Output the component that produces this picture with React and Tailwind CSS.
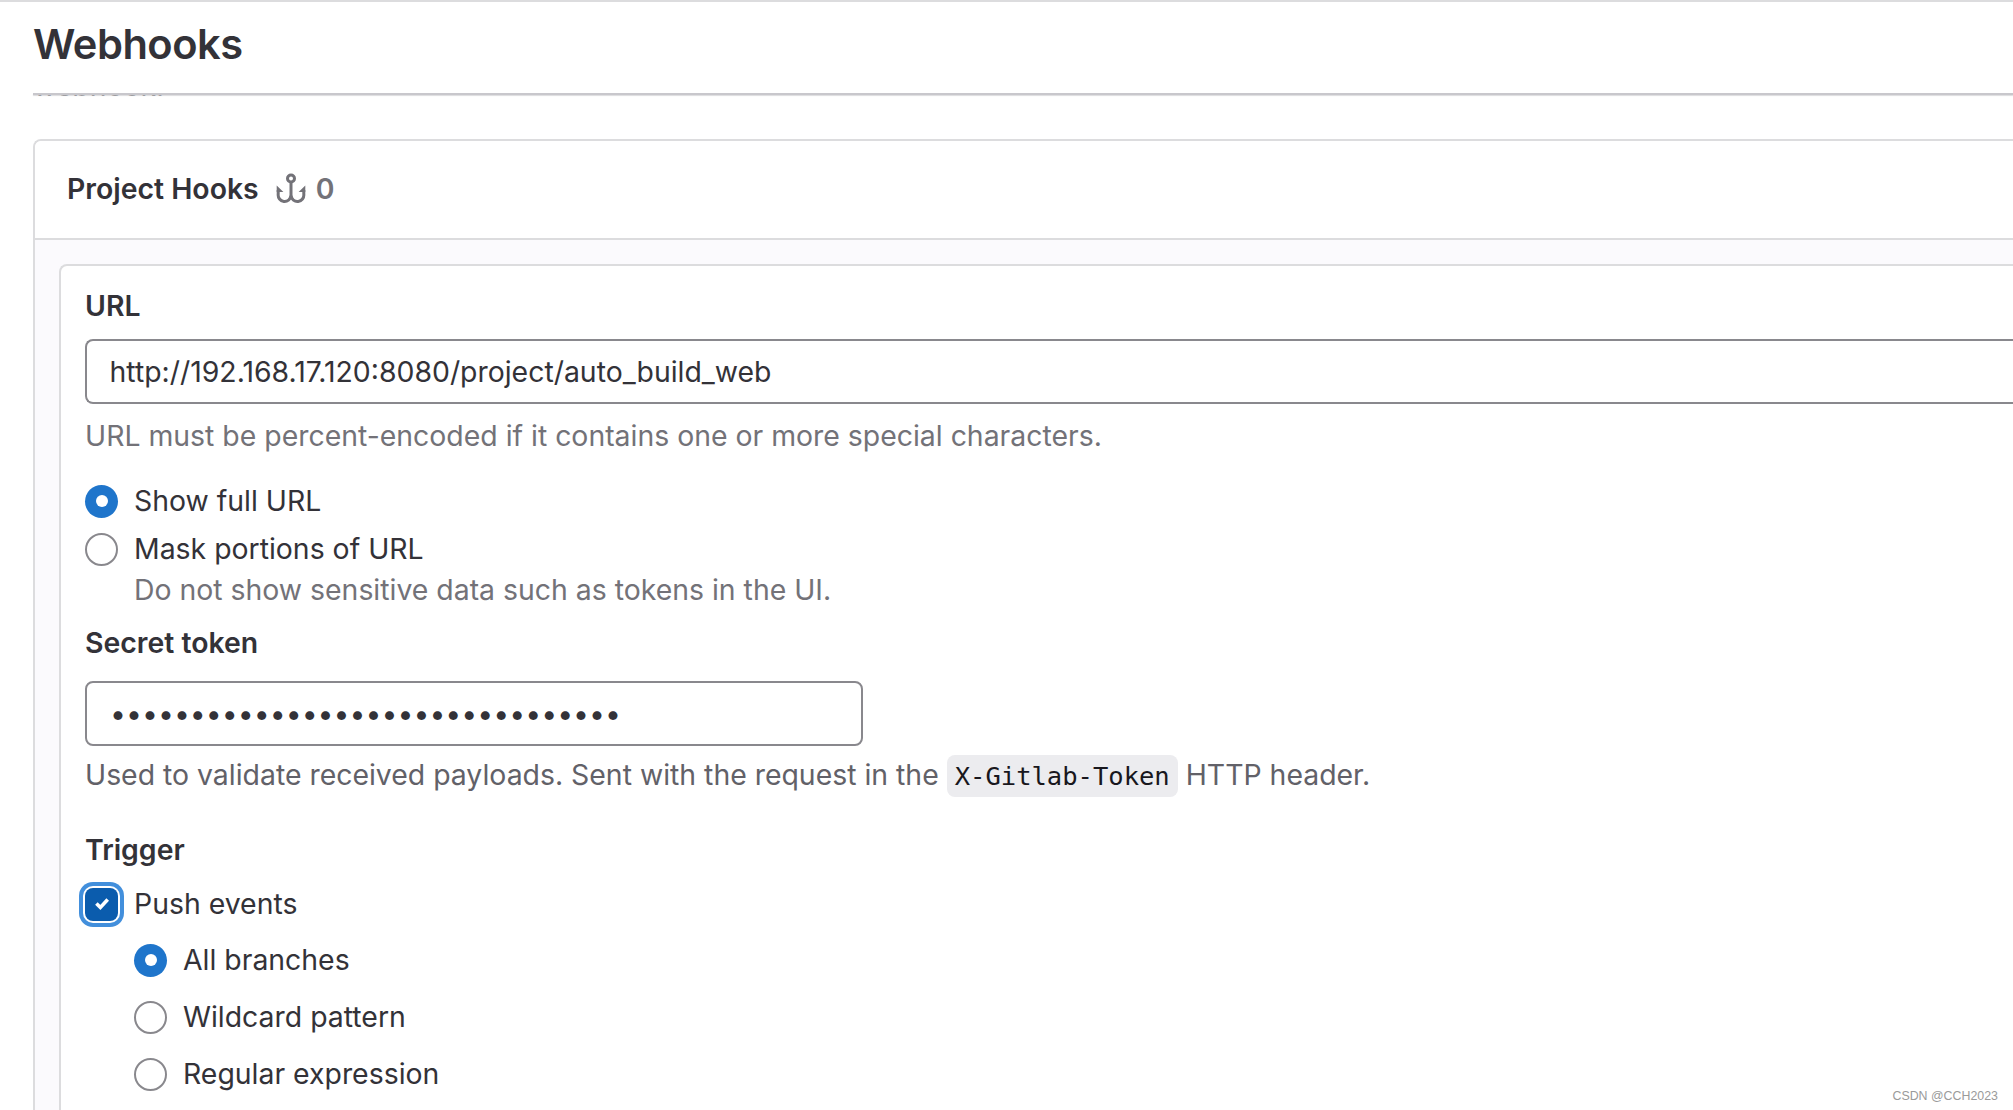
import React, { useState } from 'react';

const HookIcon = () => (
    <svg className="-mt-[2px] w-[30px] h-[30px]" viewBox="0 0 30 30" fill="none" stroke="currentColor" strokeWidth="3">
        <circle cx="15" cy="5.5" r="3.5" />
        <path d="M15 9v15.2" />
        <path d="M2.2 17v4.2a6.4 6.4 0 0 0 12.8 1.6a6.4 6.4 0 0 0 12.8-1.6V17" />
        <path d="M.7 12.6l6.7 6.4H.7zM29.3 12.6l-6.7 6.4h6.7z" fill="currentColor" stroke="none" />
    </svg>
);

const Radio = ({ label, checked, onSelect, className }) => (
    <label className={`flex h-10 items-center gap-4 ${className}`}>
        <input type="radio" checked={checked} onChange={onSelect} className="sr-only" />
        {checked ? (
            <span className="flex h-[33px] w-[33px] shrink-0 items-center justify-center rounded-full bg-[#1f75cb]">
                <span className="h-3 w-3 rounded-full bg-white" />
            </span>
        ) : (
            <span className="h-[33px] w-[33px] shrink-0 rounded-full border-2 border-[#89888d] bg-white" />
        )}
        <span>{label}</span>
    </label>
);

const Checkbox = ({ label, checked, onToggle }) => (
    <label className="mt-[14px] flex h-10 items-center gap-4">
        <input type="checkbox" checked={checked} onChange={onToggle} className="sr-only" />
        <span className="flex h-[33px] w-[33px] shrink-0 items-center justify-center rounded-[8px] bg-[#0b5cad] ring-4 ring-[#428fdc] ring-offset-2 ring-offset-white">
            {checked && (
                <svg className="h-[14px] w-4" viewBox="0 0 16 14" fill="none" stroke="white" strokeWidth="3.6">
                    <path d="M2.4 6.4l4 4L13.7 2.6" />
                </svg>
            )}
        </span>
        <span>{label}</span>
    </label>
);

const branchFilters = ['All branches', 'Wildcard pattern', 'Regular expression'];

const App = () => {
    const [url, setUrl] = useState('http://192.168.17.120:8080/project/auto_build_web');
    const [token, setToken] = useState('0123456789abcdef0123456789abcdef');
    const [maskUrl, setMaskUrl] = useState(false);
    const [pushEvents, setPushEvents] = useState(true);
    const [branchFilter, setBranchFilter] = useState('All branches');

    return (
        <div className="relative flex h-screen flex-col overflow-hidden border-t-2 border-[#dcdcde] bg-white pl-[33px] font-['Inter','Noto_Sans',sans-serif] text-[28.4px] leading-10 text-[#333238]">
            <h1 className="flex h-[84px] shrink-0 items-center text-[41.6px] font-semibold tracking-[-0.012em]">Webhooks</h1>

            {/* sticky header edge, with the description scrolled under it */}
            <div className="mt-[7px] h-[2px] shrink-0 bg-[#c8c7cc] shadow-[0_1px_1px_#dcdcde]" />
            <div className="h-[44px] shrink-0">
                <div className="flex h-[2px] items-end overflow-hidden text-[#737278]/60">
                    <span className="-mb-[9px]">webhook.</span>
                </div>
            </div>

            <section className="flex grow flex-col rounded-tl-[8px] border-t-2 border-l-2 border-[#dcdcde] bg-[#fbfafd]">
                <header className="flex h-[99px] shrink-0 items-center rounded-tl-[6px] border-b-2 border-[#dcdcde] bg-white pb-px pl-8 font-semibold">
                    <h2>Project Hooks</h2>
                    <span className="ml-[17px] flex items-center gap-[10px] text-[#737278]">
                        <HookIcon />
                        0
                    </span>
                </header>

                <form className="mt-6 ml-6 flex grow flex-col rounded-tl-[8px] border-t-2 border-l-2 border-[#dcdcde] bg-white pl-6">
                    <label className="mt-5 font-semibold">URL</label>
                    <input
                        type="text"
                        value={url}
                        onChange={(e) => setUrl(e.target.value)}
                        className="mt-[13px] h-[65px] rounded-l-[8px] border-2 border-r-0 border-[#89888d] bg-white px-[22.5px]"
                    />
                    <p className="mt-3 text-[#737278]">URL must be percent-encoded if it contains one or more special characters.</p>

                    <Radio className="mt-[25px]" label="Show full URL" checked={!maskUrl} onSelect={() => setMaskUrl(false)} />
                    <Radio className="mt-2" label="Mask portions of URL" checked={maskUrl} onSelect={() => setMaskUrl(true)} />
                    <p className="mt-px pl-[49px] text-[#737278]">Do not show sensitive data such as tokens in the UI.</p>

                    <label className="mt-[13px] font-semibold">Secret token</label>
                    <input
                        type="password"
                        value={token}
                        onChange={(e) => setToken(e.target.value)}
                        className="mt-[18px] h-[65px] w-[778px] rounded-[8px] border-2 border-[#89888d] bg-white px-[23px]"
                    />
                    <p className="mt-[9px] flex h-10 items-start text-[#626168]">
                        Used to validate received payloads. Sent with the request in the
                        <code className="mx-2 h-[42px] w-[231px] rounded-[8px] bg-[#ececef] text-center font-['DejaVu_Sans_Mono',monospace] text-[25.5px] leading-[42px] text-[#18171d]">X-Gitlab-Token</code>
                        HTTP header.
                    </p>

                    <label className="mt-[35px] font-semibold">Trigger</label>
                    <Checkbox label="Push events" checked={pushEvents} onToggle={() => setPushEvents(!pushEvents)} />
                    <div className="-mt-px flex flex-col pl-[49px]">
                        {branchFilters.map((filter) => (
                            <Radio
                                key={filter}
                                className="mt-[17px]"
                                label={filter}
                                checked={branchFilter === filter}
                                onSelect={() => setBranchFilter(filter)}
                            />
                        ))}
                    </div>
                </form>
            </section>

            <span className="absolute right-[15px] bottom-1 font-['Liberation_Sans',sans-serif] text-[12.4px] leading-5 text-[#9a9a9a]">CSDN @CCH2023</span>
        </div>
    );
};

export default App;
